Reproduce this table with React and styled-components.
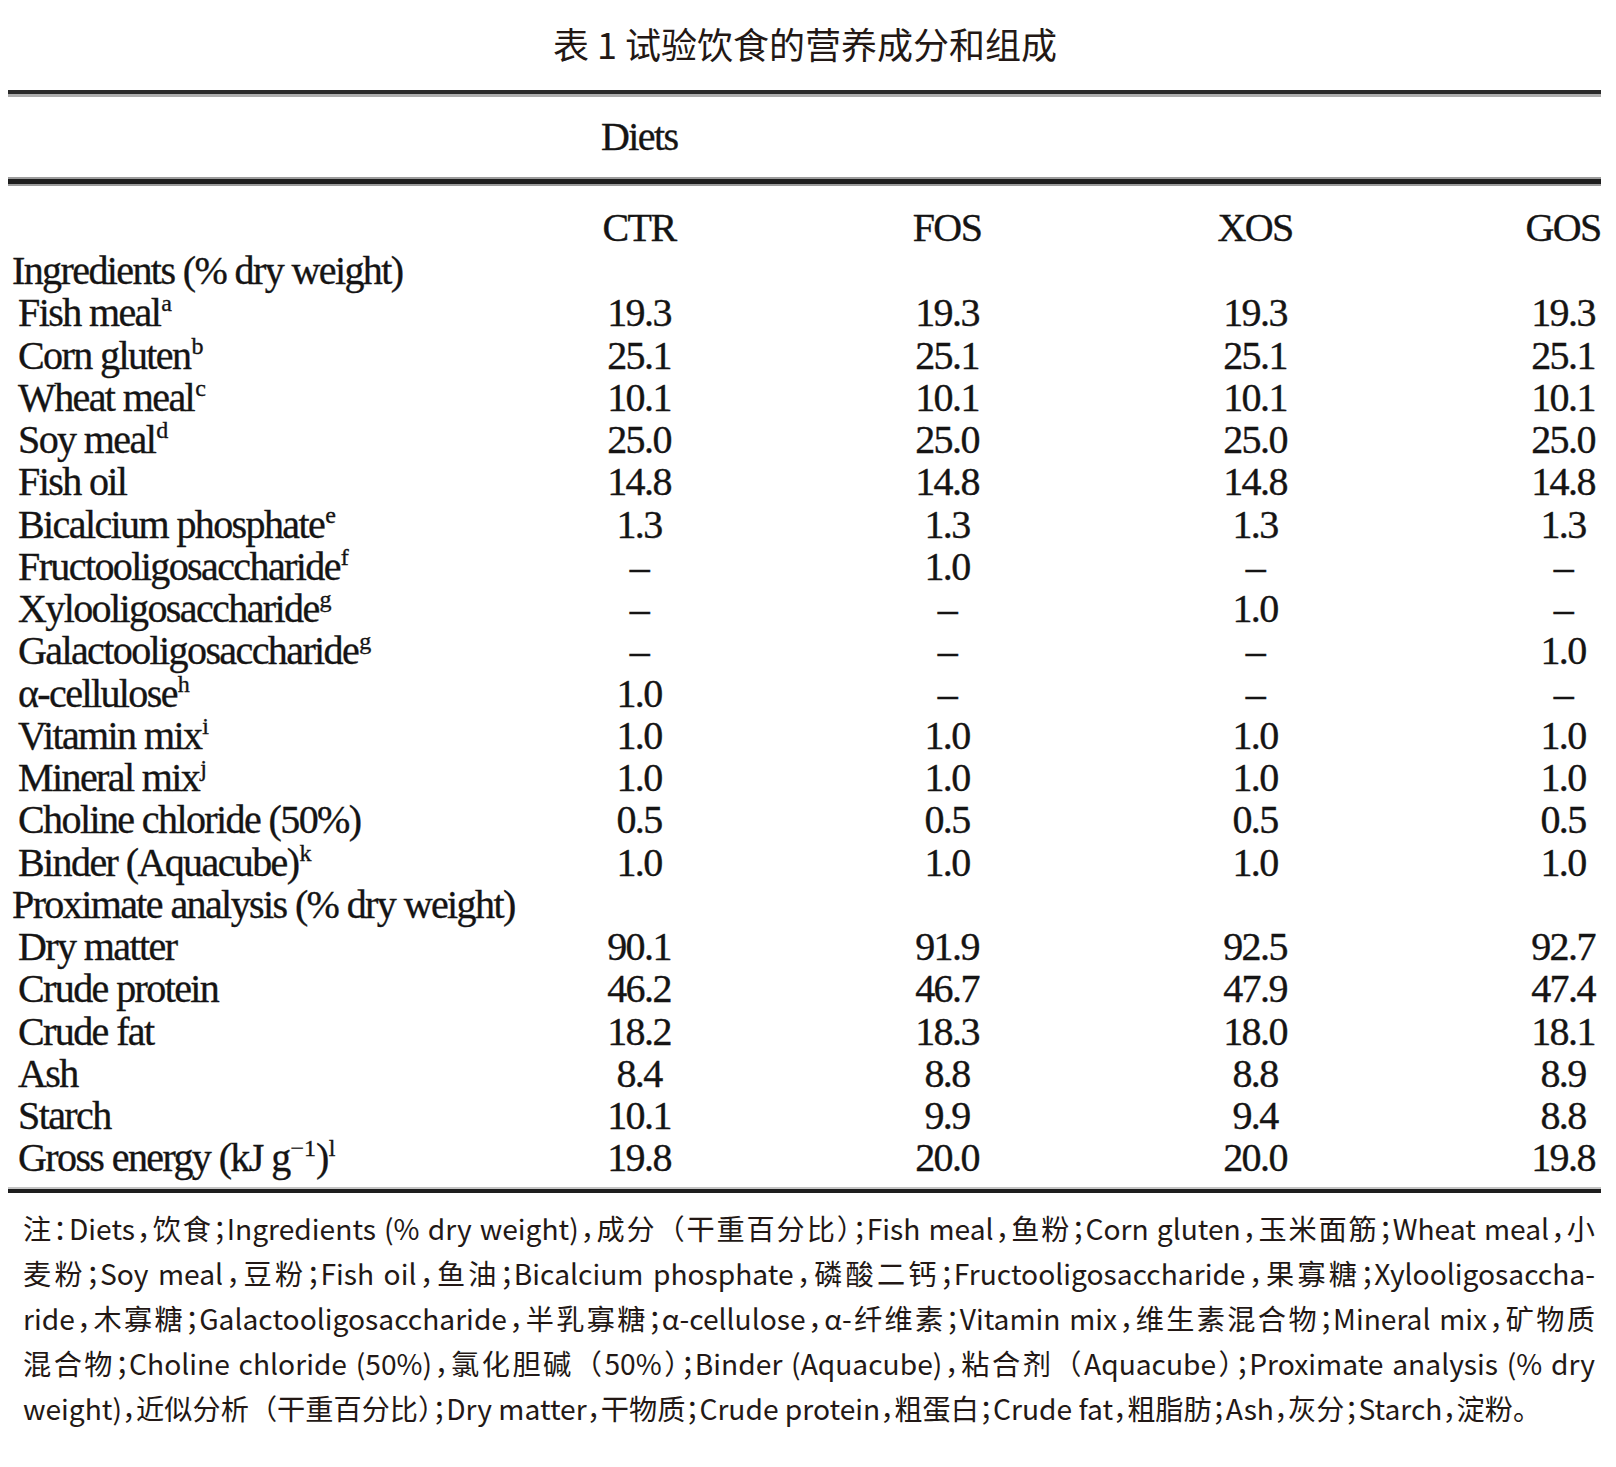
import React from "react";
import styled, { createGlobalStyle } from "styled-components";

const GlobalStyle = createGlobalStyle`
  body {
    margin: 0;
    background: #ffffff;
  }
`;

const rows = [
  { section: "Ingredients (% dry weight)" },
  { label: "Fish meal", sup: "a", values: ["19.3", "19.3", "19.3", "19.3"] },
  { label: "Corn gluten", sup: "b", values: ["25.1", "25.1", "25.1", "25.1"] },
  { label: "Wheat meal", sup: "c", values: ["10.1", "10.1", "10.1", "10.1"] },
  { label: "Soy meal", sup: "d", values: ["25.0", "25.0", "25.0", "25.0"] },
  { label: "Fish oil", values: ["14.8", "14.8", "14.8", "14.8"] },
  { label: "Bicalcium phosphate", sup: "e", values: ["1.3", "1.3", "1.3", "1.3"] },
  { label: "Fructooligosaccharide", sup: "f", values: ["–", "1.0", "–", "–"] },
  { label: "Xylooligosaccharide", sup: "g", values: ["–", "–", "1.0", "–"] },
  { label: "Galactooligosaccharide", sup: "g", values: ["–", "–", "–", "1.0"] },
  { label: "α-cellulose", sup: "h", values: ["1.0", "–", "–", "–"] },
  { label: "Vitamin mix", sup: "i", values: ["1.0", "1.0", "1.0", "1.0"] },
  { label: "Mineral mix", sup: "j", values: ["1.0", "1.0", "1.0", "1.0"] },
  { label: "Choline chloride (50%)", values: ["0.5", "0.5", "0.5", "0.5"] },
  { label: "Binder (Aquacube)", sup: "k", values: ["1.0", "1.0", "1.0", "1.0"] },
  { section: "Proximate analysis (% dry weight)" },
  { label: "Dry matter", values: ["90.1", "91.9", "92.5", "92.7"] },
  { label: "Crude protein", values: ["46.2", "46.7", "47.9", "47.4"] },
  { label: "Crude fat", values: ["18.2", "18.3", "18.0", "18.1"] },
  { label: "Ash", values: ["8.4", "8.8", "8.8", "8.9"] },
  { label: "Starch", values: ["10.1", "9.9", "9.4", "8.8"] },
  { label: "Gross energy", energy: true, values: ["19.8", "20.0", "20.0", "19.8"] },
];

const notes = [
  "注：Diets，饮食；Ingredients (% dry weight)，成分（干重百分比）；Fish meal，鱼粉；Corn gluten，玉米面筋；Wheat meal，小",
  "麦粉；Soy meal，豆粉；Fish oil，鱼油；Bicalcium phosphate，磷酸二钙；Fructooligosaccharide，果寡糖；Xylooligosaccha-",
  "ride，木寡糖；Galactooligosaccharide，半乳寡糖；α-cellulose，α-纤维素；Vitamin mix，维生素混合物；Mineral mix，矿物质",
  "混合物；Choline chloride (50%)，氯化胆碱（50%）；Binder (Aquacube)，粘合剂（Aquacube）；Proximate analysis (% dry",
  "weight)，近似分析（干重百分比）；Dry matter，干物质；Crude protein，粗蛋白；Crude fat，粗脂肪；Ash，灰分；Starch，淀粉。",
];

// full-width brackets keep their full width, other punctuation is halved
const splitParens = (line) =>
  line
    .split(/([（）])/)
    .map((part, i) =>
      part === "（" || part === "）" ? <FullWidth key={i}>{part}</FullWidth> : part
    );

export default function App() {
  return (
    <Page>
      <GlobalStyle />
      <Title>表 1 试验饮食的营养成分和组成</Title>
      <Table>
        <TopRule />
        <Row $height={80}>
          <span />
          <Cell>Diets</Cell>
        </Row>
        <MidRule />
        <Row $height={45} $top={19}>
          <span />
          <Cell>CTR</Cell>
          <Cell>FOS</Cell>
          <Cell>XOS</Cell>
          <Cell>GOS</Cell>
        </Row>
        {rows.map((row, i) =>
          row.section ? (
            <Row key={i} $height={42.25}>
              <Label $section>{row.section}</Label>
            </Row>
          ) : (
            <Row key={i} $height={42.25}>
              <Label>
                {row.label}
                {row.energy && (
                  <>
                    {" (kJ g"}
                    <Sup>−1</Sup>
                    {")"}
                    <Sup>l</Sup>
                  </>
                )}
                {row.sup && <Sup>{row.sup}</Sup>}
              </Label>
              {row.values.map((v, j) => (
                <Cell key={j}>{v}</Cell>
              ))}
            </Row>
          )
        )}
        <BottomRule />
      </Table>
      <Notes>
        {notes.map((line, i) => (
          <NoteLine key={i} $last={i === notes.length - 1}>
            {splitParens(line)}
          </NoteLine>
        ))}
      </Notes>
    </Page>
  );
}

const Page = styled.div`
  width: 1616px;
  padding-bottom: 40px;
  color: #1c1a1a;
`;

const Title = styled.div`
  font-family: "Noto Sans CJK SC", "Noto Sans", sans-serif;
  font-size: 36px;
  line-height: 86px;
  height: 86px;
  margin-bottom: 4px;
  text-align: center;
  color: #231815;
  padding-right: 6px;
`;

const Table = styled.div`
  width: 1593px;
  margin-left: 8px;
  font-family: "Liberation Serif", "Times New Roman", serif;
  font-size: 40px;
  letter-spacing: -1.6px;
  color: #151414;
  -webkit-text-stroke: 0.35px #151414;
`;

const TopRule = styled.div`
  height: 0;
  border-top: 4px solid #2a2a2a;
  border-bottom: 3px solid #adadad;
`;

const MidRule = styled.div`
  height: 5px;
  background: #1e1e1e;
  border-top: 2px solid #9c9c9c;
  border-bottom: 2px solid #9c9c9c;
`;

const BottomRule = styled.div`
  height: 4px;
  margin-top: 7px;
  background: #1e1e1e;
  border-top: 2px solid #c4c4c4;
`;

const Row = styled.div`
  display: grid;
  grid-template-columns: minmax(0, 1fr) repeat(4, 76px);
  column-gap: 232px;
  height: ${({ $height }) => $height}px;
  line-height: ${({ $height }) => $height}px;
  margin-top: ${({ $top }) => $top || 0}px;
  white-space: nowrap;
`;

const Label = styled.div`
  padding-left: ${({ $section }) => ($section ? 4 : 10)}px;
  grid-column: ${({ $section }) => ($section ? "1 / -1" : "auto")};
`;

const Cell = styled.div`
  text-align: center;
`;

const Sup = styled.span`
  font-size: 24px;
  letter-spacing: 0;
  vertical-align: 15px;
  line-height: 0;
  margin-left: 1px;
`;

const Notes = styled.div`
  padding: 12px 21px 0 23px;
  font-family: "Noto Sans CJK SC", "Noto Sans", sans-serif;
  font-size: 28.2px;
  line-height: 45px;
  font-feature-settings: "halt";
  color: #231815;
`;

const NoteLine = styled.div`
  white-space: nowrap;
  text-align: ${({ $last }) => ($last ? "left" : "justify")};
  text-align-last: ${({ $last }) => ($last ? "left" : "justify")};
`;

const FullWidth = styled.span`
  font-feature-settings: normal;
`;
